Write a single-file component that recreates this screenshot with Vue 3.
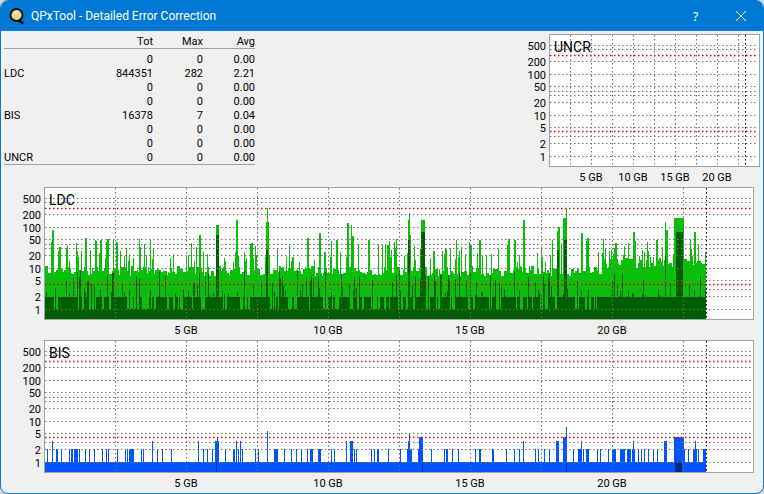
<script setup>
const rows = [
  ['', 0, 0, '0.00'],
  ['LDC', 844351, 282, '2.21'],
  ['', 0, 0, '0.00'],
  ['', 0, 0, '0.00'],
  ['BIS', 16378, 7, '0.04'],
  ['', 0, 0, '0.00'],
  ['', 0, 0, '0.00'],
  ['UNCR', 0, 0, '0.00'],
]

// y offsets of the log scale, from top of plot box
const hLines = [11, 15, 27, 40, 52, 57, 61, 68, 81, 93, 102, 109, 122]
const redLines = [21, 97]
const ticks = [
  ['500', 12], ['200', 28], ['100', 41], ['50', 53], ['20', 69],
  ['10', 82], ['5', 94], ['2', 110], ['1', 123],
]

let seed = 4711
const rnd = () => {
  seed = (seed * 16807) % 2147483647
  return seed / 2147483647
}

// [from, to, top] in page pixels
const ldcPeaks = [
  [52, 53, 230], [51, 51, 242], [59, 60, 247], [66, 66, 248], [85, 86, 238], [90, 90, 250],
  [100, 101, 240], [107, 108, 239], [113, 113, 252], [116, 117, 242], [126, 126, 248], [199, 200, 235],
  [216, 218, 225], [236, 237, 220], [251, 252, 243], [250, 250, 244], [267, 267, 208], [266, 268, 222],
  [307, 308, 238], [319, 320, 233], [324, 325, 252], [336, 337, 240], [347, 348, 223], [351, 351, 225],
  [352, 353, 236], [368, 369, 240], [382, 382, 245], [387, 388, 245], [408, 409, 220], [409, 409, 213],
  [410, 410, 235], [421, 424, 220], [433, 434, 251], [445, 446, 249], [470, 471, 245], [479, 480, 240],
  [507, 507, 245], [508, 509, 239], [514, 515, 240], [523, 524, 220], [537, 537, 257], [541, 541, 258],
  [550, 550, 255], [557, 557, 231], [558, 559, 227], [563, 566, 218], [566, 566, 209], [581, 582, 233],
  [587, 588, 238], [611, 611, 250], [615, 616, 243], [628, 628, 243], [633, 634, 232], [642, 642, 250],
  [656, 657, 240], [662, 662, 247], [665, 665, 222], [666, 667, 230], [674, 683, 218], [694, 695, 232],
  [698, 698, 245], [705, 705, 252],
]
const ldcDark = [
  [216, 218, 235], [266, 267, 250], [408, 409, 240], [421, 424, 232], [557, 558, 250],
  [564, 566, 240], [676, 682, 232], [665, 665, 255],
]

const bar = (x, top, bottom) => `M${x - 1} ${top - 187}V${bottom - 187}h1V${top - 187}z`

function buildLdc() {
  let light = ''
  let dark = ''
  let top = 272
  let hold = 0
  let gap = 0
  for (let x = 45; x <= 705; x++) {
    if (hold-- <= 0) {
      top = (x < 600 ? 271 : 263) + Math.round(rnd() * 10 - 5)
      hold = Math.floor(rnd() * 3)
    }
    let t = top
    if (rnd() < 0.26) t = 263 - Math.round(rnd() * 24)
    for (const p of ldcPeaks) if (x >= p[0] && x <= p[1]) t = Math.min(t, p[2])

    let d = 297
    if (x < 597) {
      if (gap > 0) {
        gap--
        d = 309
      } else if (rnd() < 0.17) {
        gap = Math.floor(rnd() * 4)
        d = 309
      }
    }
    if (rnd() < 0.2) d = Math.max(t, 296 - Math.round(rnd() * 26))
    for (const p of ldcDark) if (x >= p[0] && x <= p[1]) d = p[2]

    light += bar(x, t, 319)
    dark += bar(x, d, 319)
  }
  return [
    { color: '#08c008', d: light },
    { color: '#005f00', d: dark },
  ]
}

// bars that reach the "2" line
const bisSpots = [47, 52, 56, 57, 61, 69, 71, 72, 74, 75, 76, 77, 79, 85, 89, 94, 102, 106, 108, 117, 125, 127,
  129, 130, 131, 132, 133, 141, 143, 152, 157, 162, 171, 198, 203, 207, 212, 225, 233, 234, 238, 242, 255, 258,
  267, 274, 275, 276, 277, 284, 291, 296, 301, 307, 310, 311, 312, 318, 319, 320, 331, 334, 346, 350, 351, 352,
  354, 356, 371, 374, 377, 378, 388, 400, 407, 408, 410, 411, 418, 419, 420, 421, 431, 444, 446, 447, 452, 458,
  475, 479, 480, 492, 493, 506, 514, 519, 523, 535, 538, 544, 549, 556, 557, 558, 573, 578, 579, 580, 583, 586,
  587, 588, 597, 600, 608, 612, 613, 614, 615, 620, 621, 622, 623, 624, 627, 628, 629, 630, 632, 633, 634, 638,
  641, 644, 648, 653, 657, 664, 665, 666, 684, 688, 693, 694, 695, 696, 698, 703, 704, 705]
const bisTall = [
  [52, 52, 441], [152, 152, 441], [198, 198, 441], [215, 218, 441], [217, 217, 437], [236, 236, 441],
  [240, 240, 441], [267, 267, 431], [346, 346, 441], [350, 352, 441], [408, 409, 441], [409, 409, 433],
  [419, 422, 437], [523, 523, 441], [556, 558, 441], [563, 566, 437], [566, 566, 427], [581, 581, 441],
  [633, 633, 441], [664, 666, 441], [674, 683, 437], [695, 695, 441],
]

function buildBis() {
  let base = ''
  for (let x = 45; x <= 705; x++) base += bar(x, 309, 319)
  let tall = ''
  const spots = new Map()
  bisSpots.forEach((x) => spots.set(x, 449))
  for (const p of bisTall) for (let x = p[0]; x <= p[1]; x++) spots.set(x, p[2])
  // the BIS box sits 153px lower than the LDC one
  spots.forEach((top, x) => {
    tall += bar(x, top - 153, 309)
  })
  const darkCols = [216, 422, 566, 675, 676, 677, 678, 679, 680, 681]
  return [
    { color: '#0055ff', d: base + tall },
    { color: '#002a80', d: darkCols.map((x) => bar(x, 309, 319)).join('') },
  ]
}

const vBig = [71, 142, 213, 284, 355, 426, 497, 568, 639]

const big = [
  { name: 'LDC', bars: buildLdc() },
  { name: 'BIS', bars: buildBis() },
]
const gbLabels = [['5 GB', 185], ['10 GB', 327], ['15 GB', 469], ['20 GB', 611]]
const vSmall = [21, 42, 63, 84, 105, 126, 147, 168, 189]
const gbSmall = [['5 GB', 71], ['10 GB', 113], ['15 GB', 155], ['20 GB', 197]]
</script>

<template>
  <div class="window">
    <div class="titlebar">
      <svg class="appicon" width="18" height="18" viewBox="0 0 18 18">
        <path d="M11 13 L15 16.5" stroke="#000" stroke-width="2.4" />
        <circle cx="8.5" cy="8" r="6" fill="#f0d68a" stroke="#111" stroke-width="1.8" />
        <path d="M6 5.5 a3.4 3.4 0 0 1 4 -0.6 l-1 3 z" fill="#fff8e0" />
      </svg>
      <span class="title">QPxTool - Detailed Error Correction</span>
      <span class="spacer"></span>
      <div class="capbtn">?</div>
      <div class="capbtn">
        <svg width="12" height="12" viewBox="0 0 12 12">
          <path d="M1 1 L11 11 M11 1 L1 11" stroke="#fff" stroke-width="1" fill="none" />
        </svg>
      </div>
    </div>

    <div class="top">
      <div class="stats">
        <div class="row head">
          <span></span><span>Tot</span><span>Max</span><span>Avg</span>
        </div>
        <div class="body">
          <div v-for="(r, i) in rows" :key="i" class="row">
            <span>{{ r[0] }}</span><span>{{ r[1] }}</span><span>{{ r[2] }}</span><span>{{ r[3] }}</span>
          </div>
        </div>
      </div>

      <svg class="small" width="243" height="153" viewBox="0 0 243 153">
        <rect x="29.5" y="0.5" width="210" height="132" fill="#fff" stroke="#a0a0a0" />
        <g transform="translate(29 0)">
          <path v-for="y in hLines" :key="y" :d="`M1 ${y + 0.5}H209`" class="dots" />
          <path v-for="y in redLines" :key="y" :d="`M1 ${y + 0.5}H209`" class="dots red" />
          <path v-for="x in vSmall" :key="x" :d="`M${x + 0.5} 1V132`" class="dots" />
          <path d="M196.5 1V132" class="dots black" />
          <text x="5" y="18" class="name">UNCR</text>
        </g>
        <text v-for="t in ticks" :key="t[0]" x="26" :y="t[1] + 4" class="lbl end">{{ t[0] }}</text>
        <text v-for="g in gbSmall" :key="g[0]" :x="g[1]" y="147" class="lbl mid">{{ g[0] }}</text>
      </svg>
    </div>

    <svg v-for="c in big" :key="c.name" class="big" width="762" height="153" viewBox="0 0 762 153">
      <rect x="43.5" y="0.5" width="709" height="132" fill="#fff" stroke="#a0a0a0" />
      <path v-for="b in c.bars" :key="b.color" :d="b.d" :fill="b.color" shape-rendering="crispEdges" />
      <g transform="translate(43 0)">
        <path v-for="y in hLines" :key="y" :d="`M1 ${y + 0.5}H708`" class="dots" />
        <path v-for="y in redLines" :key="y" :d="`M1 ${y + 0.5}H708`" class="dots red" />
        <path v-for="x in vBig" :key="x" :d="`M${x + 0.5} 1V132`" class="dots" />
        <path d="M662.5 1V132" class="dots black" />
        <text x="5" y="18" class="name">{{ c.name }}</text>
      </g>
      <text v-for="t in ticks" :key="t[0]" x="40" :y="t[1] + 4" class="lbl end">{{ t[0] }}</text>
      <text v-for="g in gbLabels" :key="g[0]" :x="g[1]" y="147" class="lbl mid">{{ g[0] }}</text>
    </svg>
  </div>
</template>

<style scoped>
.window {
  box-sizing: border-box;
  width: 764px;
  height: 494px;
  border: 1px solid #0078d4;
  border-radius: 8px;
  overflow: hidden;
  background: #f0f0f0;
  display: flex;
  flex-direction: column;
  font-family: Roboto, "Liberation Sans", sans-serif;
  font-size: 11px;
  color: #000;
}

.titlebar {
  height: 30px;
  flex: none;
  background: #0078d4;
  color: #fff;
  display: flex;
  align-items: center;
  padding-left: 7px;
}

.appicon {
  margin-right: 5px;
  flex: none;
}

.title {
  font-family: Roboto, sans-serif;
  font-size: 12px;
}

.spacer {
  flex: 1;
}

.capbtn {
  width: 45px;
  height: 30px;
  display: flex;
  align-items: center;
  justify-content: center;
  font-family: "Noto Sans", sans-serif;
  font-size: 12px;
}

.top {
  height: 156px;
  flex: none;
  display: flex;
  justify-content: space-between;
  align-items: flex-start;
}

.stats {
  width: 251px;
  margin: 3px 0 0 3px;
}

.row {
  display: grid;
  grid-template-columns: 99px 50px 50px 52px;
  height: 14px;
  line-height: 16px;
  text-align: right;
}

.row span:first-child {
  text-align: left;
}

.head {
  border-bottom: 1px solid #a0a0a0;
  box-sizing: content-box;
}

.body {
  padding-top: 3px;
  border-bottom: 1px solid #a0a0a0;
}

.small {
  margin-top: 3px;
  display: block;
  flex: none;
}

.big {
  display: block;
  flex: none;
}

.dots {
  fill: none;
  stroke: #707070;
  stroke-width: 1;
  stroke-dasharray: 1.5 2.5;
}

.dots.red {
  stroke: #e80000;
  stroke-width: 1.6;
}

.dots.black {
  stroke: #000;
}

.lbl {
  font-size: 11px;
  fill: #000;
}

.end {
  text-anchor: end;
}

.mid {
  text-anchor: middle;
}

.name {
  font-size: 14px;
  fill: #000;
}
</style>

<style>
html,
body {
  background: #d8d8d8;
}
</style>
